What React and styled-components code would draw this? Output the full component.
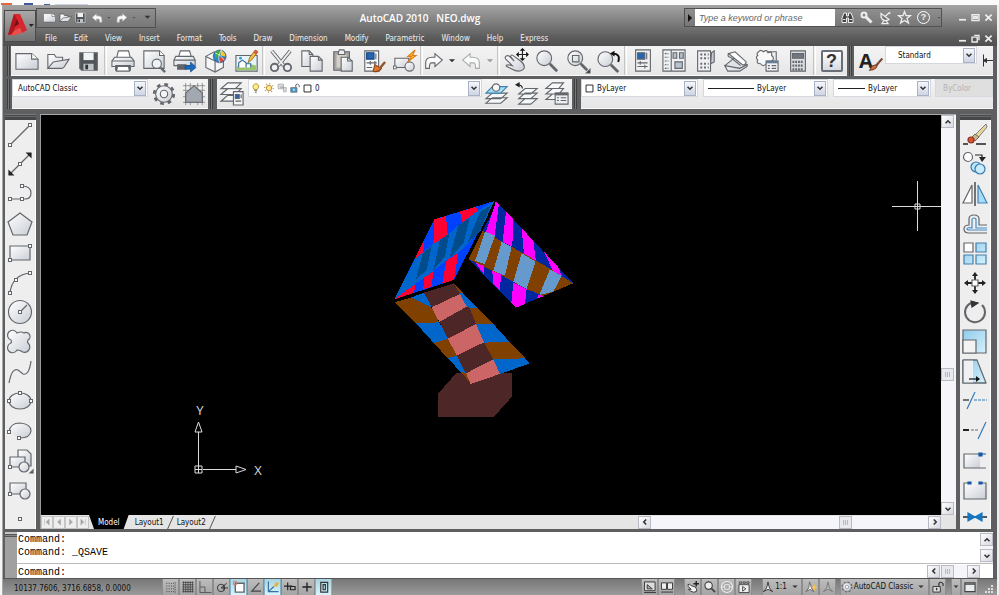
import React from "react";
import styled, { createGlobalStyle, css } from "styled-components";

const GlobalStyle = createGlobalStyle`
  * {
    box-sizing: border-box;
  }
  body {
    margin: 0;
    background: #fff;
    font: 8px/12px "DejaVu Sans Condensed", "DejaVu Sans", sans-serif;
    color: #111;
  }
  button, input, select {
    margin: 0;
    padding: 0;
    border: 0;
    background: none;
    font: inherit;
    color: inherit;
  }
`;

const metal = "url(#metal)";
const sky = "url(#sky)";

/* ---------- icons, all on a 26 unit square ---------- */

const Svg = styled.svg`
  display: block;
  flex: none;
  width: ${p => p.$size || 26}px;
  height: ${p => p.$size || 26}px;
  fill: none;
  stroke: ${p => p.$stroke || "#63666b"};
  stroke-width: 1.2;
  overflow: visible;
`;

const Dot = ({ x, y }) => (
  <rect x={x - 1.5} y={y - 1.5} width="3" height="3" fill="#fff" strokeWidth="1" />
);

const sheetPath = "M1 5H18L25 11V22H1Z";
const folderPath = "M2 21V6H9L11 9H18V12M2 21L8 14L25 11L20 19Q19 21 17 21Z";

const icons = {
  sheet: (
    <>
      <path d={sheetPath} fill={metal} />
      <path d="M18 5V11H25" fill="#fff" />
    </>
  ),
  folder: <path d={folderPath} fill={metal} />,
  disk: (
    <>
      <path d="M3 4H22V23H5L3 21Z" fill="#515459" />
      <path d="M7 4H18V12H7Z" fill="#f1f2f4" stroke="none" />
      <path d="M7 16H18V23H7Z" fill="#bfc4c9" stroke="none" />
      <path d="M9 17H12V22H9Z" fill="#333" stroke="none" />
    </>
  ),
  printer: (
    <>
      <path d="M6 10L8 2H19L21 10Z" fill="#fff" />
      <path d="M4 9H22L25 13V19H1V13Z" fill={metal} />
      <path d="M1 13H25M5 18H21V23H5Z" fill="#60646a" />
      <path d="M7 19H19L20 24H6Z" fill="#fff" />
    </>
  ),
  preview: (
    <>
      <path d="M2 2H19L24 7V21H2Z" fill={metal} />
      <path d="M19 2V7H24" fill="#fff" />
      <circle cx="16" cy="16" r="5" fill="#eef3f8" />
      <path d="M20 20L25 25" strokeWidth="2.5" />
    </>
  ),
  publish: (
    <>
      <path d="M6 9L8 2H18L20 9" fill="#fff" />
      <path d="M3 8H22L24 12V18H1V12Z" fill={metal} />
      <path d="M1 12H24M5 17H14V22H5Z" fill="#60646a" />
      <path d="M13 18H19V14L25 20L19 25V22H13Z" fill="#1869bd" stroke="#0f4c90" strokeWidth=".7" />
    </>
  ),
  globe: (
    <>
      <path d="M2 8L11 3L21 9V20L12 25L2 20Z" fill="#f5f6f8" />
      <path d="M2 8L12 13V25M12 13L21 9" />
      <circle cx="17" cy="8" r="7" fill="#2687c8" stroke="#226" strokeWidth=".5" />
      <path d="M12 4Q16 0 18 3Q18 8 12 10Z" fill="#43ad3b" stroke="none" />
      <path d="M18 1Q24 4 23 8L18 7Z" fill="#f4c830" stroke="none" />
      <path d="M17 9L23 10Q21 14 17 15Z" fill="#e0492d" stroke="none" />
      <path d="M12 4Q18 6 22 12M19 1Q14 8 17 15" stroke="#fff" strokeWidth=".7" />
    </>
  ),
  picture: (
    <>
      <path d="M1 7H24V24H1Z" fill="#e5f3fb" />
      <path d="M2 19Q12 14 23 18V23H2Z" fill="#99c56d" stroke="none" />
      <path d="M4 20V15L8 12L12 15V20M12 20V16H17V20" fill="#fff" stroke="#316993" />
      <circle cx="6" cy="10" r="1.5" fill="#3b94c8" stroke="none" />
      <path d="M14 15L16 9L22 1L25 3L18 12Z" fill="#f1bd3b" stroke="#875b21" strokeWidth=".8" />
      <path d="M22 1L25 3L23 6L20 4Z" fill="#d4593b" stroke="none" />
    </>
  ),
  cut: (
    <>
      <path d="M3 2L16 18M23 2L10 18" strokeWidth="4" />
      <path d="M3 2L16 18M23 2L10 18" stroke="#e9ebee" strokeWidth="2" />
      <circle cx="6" cy="20" r="4" fill="#edf0f3" strokeWidth="2" />
      <circle cx="20" cy="20" r="4" fill="#edf0f3" strokeWidth="2" />
    </>
  ),
  copy: (
    <>
      <path d="M2 2H10L14 6V19H2Z" fill={metal} />
      <path d="M11 8H20L24 12V24H11Z" fill={metal} />
      <path d="M20 8V12H24M10 2V6H14" />
    </>
  ),
  paste: (
    <>
      <path d="M3 3H20V23H3Z" fill="#aaa6a1" />
      <path d="M6 6H17V20H6Z" fill="#d5d0ca" stroke="none" />
      <path d="M8 4L9 1H14L15 4V6H8Z" fill="#eee" />
      <path d="M11 9H18L23 13V24H11Z" fill={metal} />
      <path d="M18 9V13H23" />
    </>
  ),
  match: (
    <>
      <path d="M3 2H18V24H3Z" fill="#f6f7f8" />
      <path d="M5 4H13V11H5Z" fill="#2665b0" stroke="#164781" />
      <path d="M15 5V11M5 15H16M5 20H11M9 13V17M14 13V17" />
      <path d="M25 14L20 20" strokeWidth="2.5" stroke="#8f532e" />
      <path d="M14 17L21 21Q18 26 12 24Z" fill="#df7730" stroke="#894719" />
    </>
  ),
  block: (
    <>
      <path d="M2 10H17V20H2Z" fill={metal} />
      <circle cx="18" cy="19" r="5" fill={metal} />
      <Dot x={2} y={20} />
      <path d="M24 1L16 8H20L16 14L25 7H21Z" fill="#ffc22c" stroke="#dc7c16" />
    </>
  ),
  undo: <path d="M4 21V15Q4 9 11 9H14V5L22 12L14 19V15H10Q8 15 8 21Z" fill="#fafafa" />,
  redo: <path d="M22 21V15Q22 9 15 9H12V5L4 12L12 19V15H16Q18 15 18 21Z" fill="#fafafa" stroke="#a9acae" />,
  caret: <path d="M8 10H18L13 15Z" fill="#333" stroke="none" />,
  caretOff: <path d="M8 10H18L13 15Z" fill="#999" stroke="none" />,
  pan: (
    <>
      <path d="M2 8Q4 6 7 9L11 13L7 8Q8 5 11 8L18 13Q24 18 21 22Q16 26 9 22L3 19Q1 17 5 17L9 18L3 12Q0 9 2 8Z" fill={metal} />
      <path d="M20 0V12M14 6H26" stroke="#222" />
      <path d="M20 -1L23 2H17ZM20 13L23 10H17ZM13 6L16 3V9ZM27 6L24 3V9Z" fill="#111" stroke="none" />
    </>
  ),
  zoom: (
    <>
      <circle cx="10" cy="10" r="8" fill={metal} />
      <path d="M16 16L24 24" strokeWidth="3" />
    </>
  ),
  zoomWindow: (
    <>
      <circle cx="10" cy="10" r="8" fill={metal} />
      <path d="M7 7H14V14H7Z" />
      <path d="M16 16L23 23" strokeWidth="3" />
      <path d="M26 22V26H22Z" fill="#000" />
    </>
  ),
  zoomPrevious: (
    <>
      <circle cx="9" cy="11" r="8" fill={metal} />
      <path d="M15 17L23 25" strokeWidth="3" />
      <path d="M17 5Q26 5 23 14" stroke="#111" strokeWidth="2" />
      <path d="M14 5L19 2V8Z" fill="#111" stroke="none" />
    </>
  ),
  properties: (
    <>
      <path d="M5 1H21V24H5Z" fill="#eef0f2" />
      <path d="M7 4H15V11H7Z" fill="#2665b0" />
      <path d="M17 4V11M7 15H18M7 19H18M10 13V17M15 17V21" />
    </>
  ),
  designCenter: (
    <>
      <path d="M1 1H25V24H1ZM10 1V24" fill="#eef0f2" />
      <path d="M3 5H7M3 9H7M3 13H7M3 17H7M3 21H7" strokeDasharray="2 1" />
      <path d="M12 4H16V10H12ZM19 4H23V10H19ZM14 14H22V21H14Z" fill="#b6c3d1" />
    </>
  ),
  palette: (
    <>
      <path d="M20 4L23 2V14L19 16Z" fill="#c8cbd0" />
      <path d="M5 2H19V24H5Z" fill="#eef0f2" />
      <path d="M8 6H10M12 6H14M16 6H17M8 10H10M12 10H14M16 10H17M8 16H10M12 16H14M16 16H17M8 20H10M12 20H14M16 20H17" strokeWidth="2" />
    </>
  ),
  sheetSet: (
    <>
      <path d="M1 18L12 9L25 17L17 21H3Z" fill="#dfe4e8" />
      <path d="M1 18L17 21L25 17V19L17 24H4Z" fill={metal} />
      <path d="M5 5L12 3L24 14Q23 18 20 17Z" fill="#fff" />
      <path d="M5 5Q3 8 7 9L18 18" />
    </>
  ),
  markup: (
    <>
      <path d="M4 3Q6 0 9 3Q13 0 14 4Q19 2 18 7Q22 10 18 13Q17 17 12 16Q9 20 6 16Q1 16 3 12Q0 9 3 7Q1 5 4 3Z" fill="#f8f8f9" />
      <path d="M14 3H23V12" />
      <path d="M12 13H25V24H12Z" fill="#f2f4f7" />
      <path d="M12 14H25" strokeWidth="3" stroke="#657c95" />
      <path d="M14 18H16M18 18H23M14 21H16M18 21H23" />
    </>
  ),
  calculator: (
    <>
      <path d="M5 2H21V24H5Z" fill="#d8dce1" />
      <path d="M7 5H19V10H7Z" fill="#737780" />
      <path d="M7 14H19M7 18H19M7 22H19" strokeWidth="2.5" strokeDasharray="2 1" />
    </>
  ),
  gear: (
    <>
      <circle cx="13" cy="13" r="10.5" strokeWidth="3" strokeDasharray="4 4.25" />
      <circle cx="13" cy="13" r="9" fill={metal} />
      <circle cx="13" cy="13" r="4" fill="#f4f4f4" />
    </>
  ),
  house: (
    <>
      <path d="M1 4H25M1 22H25M4 1V25M22 1V25M1 9H25M9 1V25M17 1V25M1 16H25" strokeWidth=".8" stroke="#777" />
      <path d="M4 12L13 4L22 12V22H4Z" fill="#a2a8b0" />
    </>
  ),
  layers: (
    <>
      <path d="M1 21L8 15H22L16 21ZM1 14L8 8H22L16 14ZM1 8L8 2H22L16 8Z" fill="#f7f8fa" />
      <path d="M14 11H24V25H14Z" fill="#f6f7f8" />
      <path d="M16 14H20V18H16Z" fill="#2665b0" />
      <path d="M22 14V18M16 21H22" />
    </>
  ),
  layerCurrent: (
    <>
      <path d="M1 23L8 17H24L17 23ZM1 18L8 12H24L17 18Z" fill="#f7f8fa" />
      <path d="M1 12L8 5H24L17 12Z" fill="#a9ddf6" stroke="#3c83ae" />
      <circle cx="12" cy="6" r="4" fill="#f6f6f6" />
    </>
  ),
  layerPrevious: (
    <>
      <path d="M4 24L11 18H24L17 24ZM4 18L11 12H24L17 18ZM4 13L11 7H24L17 13Z" fill="#f7f8fa" />
      <path d="M8 7Q8 3 2 3" stroke="#222" />
      <path d="M0 3L5 0V6Z" fill="#222" stroke="none" />
    </>
  ),
  layerState: (
    <>
      <path d="M1 19L8 13H20L15 19ZM1 13L8 7H20L15 13ZM1 7L8 1H20L15 7Z" fill="#f7f8fa" />
      <path d="M11 12H25V24H11Z" fill="#eceff2" />
      <path d="M11 13H25" strokeWidth="3" />
      <path d="M13 17H15M17 17H23M13 20H15M17 20H23" />
    </>
  ),
  line: (
    <>
      <path d="M3 23L23 3" />
      <Dot x={3} y={23} />
      <Dot x={23} y={3} />
    </>
  ),
  xline: (
    <>
      <path d="M3 23L23 3" />
      <path d="M24 2V6L20 2ZM2 24V20L6 24Z" fill="#222" stroke="#222" />
      <Dot x={13} y={13} />
    </>
  ),
  pline: (
    <>
      <path d="M3 18H18Q24 18 24 12Q24 5 15 5" />
      <Dot x={3} y={18} />
      <Dot x={15} y={18} />
      <Dot x={15} y={5} />
    </>
  ),
  polygon: <path d="M13 2L25 11L20 24H6L1 11Z" fill={metal} />,
  rect: (
    <>
      <path d="M3 6H23V20H3Z" fill={metal} />
      <Dot x={3} y={20} />
      <Dot x={23} y={6} />
    </>
  ),
  arc: (
    <>
      <path d="M3 23Q5 5 23 3" />
      <Dot x={3} y={23} />
      <Dot x={9} y={10} />
      <Dot x={23} y={3} />
    </>
  ),
  circle: (
    <>
      <circle cx="13" cy="13" r="11.5" fill={metal} />
      <path d="M13 13L20 6" />
      <Dot x={13} y={13} />
    </>
  ),
  cloud: (
    <path
      d="M4 11A5 5 0 1 1 10 4Q14 2 17 4A4 4 0 0 1 21 11Q20 13 21 14A5 5 0 1 1 14 22Q12 21 10 21A5 5 0 1 1 4 14Q5 13 4 11Z"
      fill={metal}
    />
  ),
  spline: <path d="M2 24Q5 8 11 11L16 15Q22 17 24 2" />,
  ellipse: (
    <>
      <ellipse cx="13" cy="13" rx="11" ry="8" fill={metal} />
      <Dot x={2} y={13} />
      <Dot x={24} y={13} />
      <Dot x={13} y={5} />
    </>
  ),
  ellipseArc: (
    <>
      <path d="M2 14Q3 5 13 5Q24 6 24 13Q23 20 13 20" fill={metal} />
      <Dot x={2} y={14} />
      <Dot x={12} y={20} />
    </>
  ),
  insert: (
    <>
      <path d="M11 9V2H20L24 6V18H11" fill={metal} />
      <path d="M3 9H18V19H3Z" fill={metal} />
      <circle cx="17" cy="19" r="5" fill={metal} />
      <Dot x={3} y={19} />
      <path d="M26 22V25H23Z" fill="#000" />
    </>
  ),
  makeBlock: (
    <>
      <path d="M3 6H19V17H3Z" fill={metal} />
      <circle cx="18" cy="17" r="5" fill={metal} />
      <Dot x={3} y={17} />
    </>
  ),
  point: <Dot x={13} y={15} />,
  erase: (
    <>
      <path d="M1 22H6M14 22H24" stroke="#222" strokeWidth="1.5" />
      <path d="M13 13L24 2L25 5L15 17Z" fill="#ead59a" strokeWidth=".8" />
      <path d="M10 15L13 12L17 15L13 19Z" fill="#c9b98a" stroke="#555" strokeWidth=".8" />
      <circle cx="9" cy="18" r="3" fill="#dc5033" stroke="#8d3424" />
    </>
  ),
  copyObject: (
    <>
      <circle cx="6" cy="6" r="4.5" fill="#fff" />
      <path d="M13 4H20V8" stroke="#222" />
      <path d="M17 6H24L20 11Z" fill="#222" stroke="none" />
      <circle cx="14" cy="16" r="5" fill="#b8e5fb" stroke="#3979ad" />
      <circle cx="18" cy="18" r="5" fill="#c9ebfc" stroke="#3979ad" />
    </>
  ),
  mirror: (
    <>
      <path d="M10 4V22H1Z" fill="#fff" />
      <path d="M13 1V25" stroke="#222" />
      <path d="M16 4V22H25Z" fill="#a6dcf8" stroke="#4383b4" />
    </>
  ),
  offset: (
    <>
      <path d="M25 14H17V8Q17 4 12 4Q7 4 7 8V14Q2 14 2 18Q2 22 7 22H25" />
      <path d="M25 17H14V9Q14 7 12 7Q10 7 10 9V17Q5 16 5 18Q5 19 8 19H25" stroke="#478dc4" />
    </>
  ),
  array: (
    <>
      <path d="M2 3H11V12H2Z" fill="#fff" />
      <path d="M14 3H24V12H14ZM2 15H11V24H2ZM14 15H24V24H14Z" fill={sky} stroke="#447eaa" />
    </>
  ),
  move: (
    <>
      <path d="M13 4V22M4 13H22" stroke="#222" strokeWidth="1.8" />
      <path d="M13 2L16 6H10ZM13 24L16 20H10ZM2 13L6 10V16ZM24 13L20 10V16Z" fill="#222" stroke="none" />
      <path d="M10 10H16V16H10Z" fill="#fff" />
    </>
  ),
  rotate: (
    <>
      <path d="M20 6A10 10 0 1 1 9 4" strokeWidth="2" />
      <path d="M9 2L16 4L10 8Z" fill="#333" stroke="#333" />
    </>
  ),
  scale: (
    <>
      <path d="M1 1H24V24H1Z" fill={sky} />
      <path d="M1 11H14V24H1Z" fill="#f3f3f4" />
    </>
  ),
  stretch: (
    <>
      <path d="M1 1H15L24 24H1Z" fill={sky} />
      <path d="M1 1H11V24H1Z" fill="#eef0f3" stroke="none" />
      <path d="M1 1H15M1 1V24H24" />
      <path d="M7 20H17" stroke="#111" />
      <path d="M18 20L14 17V23Z" fill="#111" stroke="none" />
    </>
  ),
  trim: (
    <>
      <path d="M1 12H7" stroke="#222" />
      <path d="M12 12H25" strokeDasharray="3 1" stroke="#347abb" />
      <path d="M5 21L13 4" stroke="#347abb" />
    </>
  ),
  extend: (
    <>
      <path d="M1 12H7" stroke="#222" strokeWidth="2" />
      <path d="M9 12H17" strokeDasharray="3 1" />
      <path d="M16 21L24 4" stroke="#347abb" />
    </>
  ),
  breakAt: (
    <>
      <path d="M2 6H18V20H2Z" fill={metal} stroke="none" />
      <path d="M18 6H2V20H24" />
      <path d="M18 6H24M17 5H20V8H17Z" fill="#1759a4" stroke="#1759a4" />
    </>
  ),
  breakLine: (
    <>
      <path d="M7 6H2V22H24V6H18" fill={metal} />
      <path d="M6 5H9V7H6ZM17 5H20V7H17Z" fill="#1759a4" stroke="#1759a4" />
    </>
  ),
  join: (
    <>
      <path d="M1 13H25" stroke="#222" strokeWidth="1.5" />
      <path d="M6 9V17L13 13ZM20 9V17L13 13Z" fill="#1676c1" stroke="#1676c1" />
    </>
  ),
  bulb: (
    <>
      <path d="M8 17Q2 7 9 3Q18 0 20 8Q20 13 16 17Z" fill="#ffed85" stroke="#a27e23" strokeWidth="2" />
      <path d="M9 20H16M10 24H15" strokeWidth="2.5" />
    </>
  ),
  sun: (
    <>
      <circle cx="13" cy="13" r="11" stroke="#b88630" strokeWidth="4" strokeDasharray="2 6.6" />
      <circle cx="13" cy="13" r="7" fill="#ffea83" stroke="#a77630" strokeWidth="2" />
    </>
  ),
  viewports: <path d="M3 3H17V15H3ZM9 10H17V23H24V12H9Z" fill="#ddd" stroke="#a5a5a5" strokeWidth="2" />,
  unlock: (
    <>
      <path d="M15 12V5Q19 0 24 6V11" strokeWidth="2.5" />
      <path d="M2 12H18V24H2Z" fill="#489bcf" strokeWidth="2" />
      <path d="M10 15V20" stroke="#fff" strokeWidth="3" />
    </>
  ),
  unlockGrey: (
    <>
      <path d="M15 12V5Q19 0 24 6V11" stroke="#333" strokeWidth="2.5" />
      <path d="M2 12H18V24H2Z" fill="#ddd" stroke="#333" strokeWidth="2" />
      <path d="M10 15V20" stroke="#333" strokeWidth="3" />
    </>
  ),
  swatch: <path d="M3 3H23V23H3Z" fill="#fff" stroke="#111" strokeWidth="2.5" />,
  binoculars: (
    <>
      <path d="M2 23V14L6 4H11V10H15V4H20L24 14V23H15V14H11V23Z" fill="#444" stroke="#eee" strokeWidth="2" />
      <path d="M4 17H9M17 17H22" stroke="#ddd" strokeWidth="2" />
    </>
  ),
  key: (
    <>
      <path d="M11 11L23 23" stroke="#eee" strokeWidth="6" />
      <circle cx="8" cy="8" r="5" stroke="#eee" strokeWidth="4" />
    </>
  ),
  dish: (
    <>
      <path d="M4 5L20 17Q12 22 6 16Q3 11 4 5Z" fill="#777" stroke="#eee" strokeWidth="2.5" />
      <path d="M12 11L20 4M10 19L6 25H18L14 19" stroke="#eee" strokeWidth="2.5" />
      <circle cx="21" cy="4" r="2" fill="#eee" stroke="none" />
    </>
  ),
  star: <path d="M13 1L16 9H25L18 15L21 24L13 19L5 24L8 15L1 9H10Z" stroke="#eee" strokeWidth="2.5" />,
  annotation: (
    <path d="M13 2L10 15L3 23L13 18L23 23L16 15Z" fill="#fff" stroke="#333" strokeWidth="2" />
  ),
  annotationAuto: (
    <>
      <path d="M10 2L8 15L2 23L11 18L19 23L14 15Z" fill="#fff" stroke="#666" strokeWidth="2" />
      <path d="M20 6L22 12L27 14L22 16L20 22L18 16L14 14L18 12Z" fill="#f9c54b" stroke="none" />
    </>
  ),
  annotationOff: <path d="M13 2L10 15L3 23L13 18L23 23L16 15Z" fill="#bbb" stroke="#777" strokeWidth="2" />,
  snap: <path d="M3 5H21M3 11H21M3 17H21M3 23H21M22 3V25" stroke="#333" strokeWidth="2" strokeDasharray="2 3" />,
  grid: <path d="M1 3H25M1 8H25M1 13H25M1 18H25M1 23H25M3 1V25M8 1V25M13 1V25M18 1V25M23 1V25" stroke="#333" strokeWidth="1.5" />,
  ortho: <path d="M2 0V25H27M2 13H13V25" stroke="#555" strokeWidth="2" />,
  polar: (
    <>
      <circle cx="11" cy="15" r="8" stroke="#333" strokeWidth="2" />
      <path d="M23 5L11 15H26M17 9V20" stroke="#333" strokeWidth="2" />
    </>
  ),
  osnap: (
    <>
      <path d="M5 5H24V24H5Z" fill="#fff" strokeWidth="3" />
      <path d="M1 1H8V8H1Z" stroke="#df756d" strokeWidth="2" />
    </>
  ),
  otrack: <path d="M20 4L4 22H24" stroke="#444" strokeWidth="2.5" />,
  ducs: (
    <>
      <path d="M3 1V23H25M3 23L15 12" stroke="#37709b" strokeWidth="2.5" />
      <path d="M15 12L18 3L26 4L22 12Z" fill="#edae32" stroke="none" />
    </>
  ),
  dynamic: <path d="M8 3V20M0 11H18M14 12H24V19H14Z" stroke="#222" strokeWidth="2.5" />,
  weight: <path d="M13 3V23M3 13H23" stroke="#222" strokeWidth="3" />,
  quickProps: <path d="M6 3H21V24H6ZM11 8H16V19H11Z" stroke="#333" strokeWidth="2.5" />,
  model: <path d="M1 2H24V21H1ZM7 8V17H18ZM0 25H26" fill="#ddd" stroke="#333" strokeWidth="2" />,
  layoutView: <path d="M1 4H12V18H1ZM14 4H25V18H14ZM0 24H26" fill="#eee" stroke="#333" strokeWidth="2" />,
  hand: (
    <>
      <path d="M2 8Q5 5 9 10L18 13Q23 18 20 23Q14 26 8 22L3 18H9L3 12Z" fill="#f3f3f3" stroke="#333" strokeWidth="2" />
      <path d="M20 0V12M14 6H26" stroke="#222" strokeWidth="3" />
    </>
  ),
  lens: (
    <>
      <circle cx="10" cy="10" r="8" fill="#eee" stroke="#444" strokeWidth="2.5" />
      <path d="M16 16L24 24" stroke="#444" strokeWidth="4" />
    </>
  ),
  wheel: (
    <>
      <circle cx="13" cy="13" r="12" fill="#aaa" stroke="#eee" strokeWidth="2.5" />
      <path d="M8 8H18V18H8ZM2 13H8M18 13H24" stroke="#eee" strokeWidth="2" />
    </>
  ),
  motion: <path d="M2 8H24V25H2ZM10 12L17 17L10 22ZM3 2H8V5H3ZM11 2H16V5H11ZM19 2H24V5H19Z" fill="#eee" stroke="#444" strokeWidth="2" />,
  screen: <path d="M2 4H24V23H2ZM2 7H24" fill="#e9ecef" stroke="#444" strokeWidth="2.5" />,
  minimize: <path d="M3 17H23V22H3Z" fill="#eee" stroke="none" />,
  maximize: <path d="M3 5H23V22H3ZM8 11H18V16H8Z" stroke="#eee" strokeWidth="4" />,
  restore: <path d="M3 9H18V23H3ZM9 4H23V18" stroke="#eee" strokeWidth="4" />,
  close: <path d="M4 5L22 22M22 5L4 22" stroke="#eee" strokeWidth="5" />,
  first: <path d="M5 3V23M20 3L10 13L20 23Z" fill="#aaa" stroke="#999" />,
  prev: <path d="M18 3L8 13L18 23Z" fill="#aaa" stroke="#999" />,
  next: <path d="M8 3L18 13L8 23Z" fill="#aaa" stroke="#999" />,
  last: <path d="M21 3V23M6 3L16 13L6 23Z" fill="#aaa" stroke="#999" />,
  up: <path d="M5 17L13 9L21 17" stroke="#333" strokeWidth="5" />,
  down: <path d="M5 9L13 17L21 9" stroke="#333" strokeWidth="5" />,
  left: <path d="M17 5L9 13L17 21" stroke="#333" strokeWidth="5" />,
  right: <path d="M9 5L17 13L9 21" stroke="#333" strokeWidth="5" />,
  dimension: <path d="M3 1V25M3 13H26M9 9L3 13L9 17Z" fill="#333" stroke="#333" strokeWidth="2" />,
  textStyle: (
    <>
      <path d="M24 10L17 18" stroke="#7b4d36" strokeWidth="2.5" />
      <path d="M12 19L18 17Q18 23 9 24Z" fill="#cf7142" stroke="#74401f" />
    </>
  )
};

const Icon = ({ name, size, stroke }) => (
  <Svg viewBox="0 0 26 26" $size={size} $stroke={stroke} aria-hidden="true">
    {icons[name]}
  </Svg>
);

/* ---------- frame ---------- */

const Page = styled.div`
  display: flex;
  flex-direction: column;
  height: 100vh;
  padding: 0 2px 0 3px;
  background: linear-gradient(90deg, #f6f6f6 0 2px, #a8a8a8 2px 4px, #eee 4px);
`;

const Behind = styled.div`
  flex: none;
  height: 5px;
  margin: 0 -2px 0 -3px;
  background: #fbfbfb;
  overflow: hidden;
`;

const Window = styled.div`
  display: flex;
  flex: 1;
  flex-direction: column;
  min-height: 0;
  background: #5d5f61;
`;

const Header = styled.header`
  display: flex;
  flex: none;
  height: 41px;
  padding: 0 4px 0 1px;
  background: linear-gradient(#a4a4a4, #858585 35%, #5b5b5b 80%, #4f4f4f);
  color: #f0f0f0;
`;

const AppButton = styled.button`
  display: flex;
  align-items: center;
  width: 32px;
  height: 32px;
  margin-top: 5px;
  border: 1px solid #4a4a4a;
  background: linear-gradient(#a9a9a9, #737373);
`;

const HeaderRows = styled.div`
  display: flex;
  flex: 1;
  flex-direction: column;
`;

const TitleRow = styled.div`
  display: flex;
  align-items: center;
  height: 25px;
`;

const QuickAccess = styled.div`
  display: flex;
  align-items: center;
  justify-content: space-between;
  width: 120px;
  height: 20px;
  padding: 0 0 0 6px;
  border: 1px solid #505050;
  background: linear-gradient(#8f8f8f, #777);
`;

const Title = styled.h1`
  flex: 1;
  margin: 0;
  font: 600 10px/16px "Open Sans", sans-serif;
  text-align: center;
  white-space: pre;
  color: #fff;
`;

const Search = styled.form`
  display: flex;
  align-items: center;
  gap: 6px;
  width: 258px;
  height: 19px;
  padding-right: 3px;
  border: 1px solid #505050;
  background: linear-gradient(#8f8f8f, #777);
`;

const SearchField = styled.label`
  display: flex;
  align-items: center;
  width: 150px;
  height: 100%;
`;

const SearchInput = styled.input`
  width: 140px;
  height: 17px;
  padding-left: 4px;
  background: #fff;
  font: italic 9px/16px "Liberation Sans", sans-serif;
  color: #333;

  &::placeholder {
    color: #666;
    opacity: 1;
  }
`;

const PlainButton = styled.button`
  display: flex;
  align-items: center;
  justify-content: center;
  flex: none;
`;

const HelpMark = styled.span`
  display: block;
  width: 13px;
  height: 13px;
  border: 1px solid #fff;
  border-radius: 50%;
  font: bold 9px/11px "Liberation Sans", sans-serif;
  text-align: center;
`;

const WindowButtons = styled.div`
  display: flex;
  gap: 4px;
  margin-left: auto;
`;

const TitleEnd = styled.div`
  display: flex;
  width: 51px;
`;

const MenuRow = styled.nav`
  display: flex;
  align-items: center;
  gap: 17px;
  height: 16px;
  padding-left: 9px;
`;

const MenuButton = styled.button`
  padding-top: 1px;
  line-height: 14px;
`;

/* ---------- tool bars ---------- */

const ToolRow = styled.div`
  display: flex;
  flex: none;
  height: 30px;
  margin-bottom: 3px;
  padding: 0 4px 0 2px;
`;

const Grip = styled.div`
  flex: none;
  width: ${p => p.$width || 7}px;
  background: linear-gradient(90deg, #5d5f61 2px, #3d3e40 2px 3px, #777 3px 4px, #3d3e40 4px 5px, #5d5f61 5px);
`;

const panel = css`
  background: linear-gradient(#f4f4f4, #e6e6e6);
  border-bottom: 1px solid #fafafa;
`;

const Tools = styled.div`
  display: flex;
  flex: ${p => (p.$grow ? 1 : "none")};
  width: ${p => (p.$width ? `${p.$width}px` : "auto")};
  min-width: 0;
  overflow: hidden;
  ${panel};
`;

const ToolButton = styled.button`
  display: flex;
  align-items: center;
  justify-content: center;
  flex: none;
  width: ${p => p.$width || 31}px;
  overflow: hidden;
`;

const Separator = styled.span`
  flex: none;
  width: 3px;
  border-left: 1px solid #c4c4c4;
  border-right: 1px solid #fff;
`;

const HelpTile = styled.span`
  width: 22px;
  height: 22px;
  border: 2px solid #6a6f77;
  border-radius: 2px;
  background: linear-gradient(#fff, #d7dae0);
  font: bold 18px/19px "Liberation Sans", sans-serif;
  color: #333;
`;

const TextStyleTile = styled.span`
  display: flex;
  align-items: center;
  padding-left: 4px;
  font: bold 20px/24px "Open Sans", sans-serif;
  color: #222;

  svg {
    margin-left: -11px;
  }
`;

const Combo = styled.div`
  display: flex;
  align-items: center;
  flex: ${p => (p.$grow ? p.$grow : "none")};
  width: ${p => (p.$width ? `${p.$width}px` : "auto")};
  height: 18px;
  margin-right: ${p => p.$gap || 0}px;
  padding: 1px;
  padding-left: ${p => p.$indent || 4}px;
  gap: 3px;
  border: 1px solid #d5d9df;
  background: ${p => (p.$off ? "#dfdfdf" : "#fff")};
  color: ${p => (p.$off ? "#b3b3b3" : "#111")};
`;

const ComboSelect = styled.select`
  flex: 1;
  min-width: 0;
  height: 14px;
  padding-top: 1px;
  appearance: none;
  opacity: 1;
`;

const ComboArrow = styled.span`
  display: flex;
  align-items: center;
  justify-content: center;
  flex: none;
  width: 12px;
  height: 15px;
  border: 1px solid #a9b1c4;
  background: linear-gradient(#f5f7fb, #cfd5e4);
`;

const LineSample = styled.span`
  flex: none;
  width: ${p => p.$width}px;
  height: 1px;
  background: #222;
`;

const ComboField = ({ label, value, before, off, ...props }) => (
  <Combo $off={off} {...props}>
    {before}
    <ComboSelect aria-label={label} disabled={off}>
      <option>{value}</option>
    </ComboSelect>
    {!off && (
      <ComboArrow>
        <Icon name="down" size={8} />
      </ComboArrow>
    )}
  </Combo>
);

/* ---------- workspace ---------- */

const Workspace = styled.main`
  display: flex;
  flex: 1;
  min-height: 0;
  margin-top: 2px;
  padding: 0 6px 0 2px;
`;

const SideBar = styled.div`
  display: flex;
  flex-direction: column;
  flex: none;
  width: 31px;
`;

const SideGrip = styled.div`
  flex: none;
  height: 6px;
  border-top: 1px solid #77797b;
  background: linear-gradient(#454749 1px, #67696b 1px 2px, #454749 2px);
`;

const SideTools = styled.div`
  display: grid;
  flex: 1;
  grid-template-rows: repeat(13, minmax(0, 1fr)) 24px;
  min-height: 0;
  background: #eeeeee;
  border-right: 1px solid #fff;
`;

const SideButton = styled.button`
  display: flex;
  align-items: center;
  justify-content: center;
  min-height: 0;
`;

const DrawingWindow = styled.section`
  display: flex;
  flex: 1;
  flex-direction: column;
  min-width: 0;
  margin: 0 4px;
  border-top: 1px solid #aaa;
  border-left: 1px solid #999;
`;

const ViewRow = styled.div`
  display: flex;
  flex: 1;
  min-height: 0;
`;

const Canvas = styled.svg`
  display: block;
  flex: 1;
  min-width: 0;
  height: 100%;
  background: #000;
`;

const AxisLabel = styled.text`
  font: 13px "Open Sans", sans-serif;
  fill: #d8d8d8;
  text-anchor: middle;
`;

const Scroll = styled.div`
  display: flex;
  flex: none;
  flex-direction: ${p => (p.$vertical ? "column" : "row")};
  width: ${p => (p.$vertical ? "15px" : `${p.$length}px`)};
  height: ${p => (p.$vertical ? "auto" : "13px")};
  background: #f5f5fa;
`;

const ScrollButton = styled.button`
  display: flex;
  align-items: center;
  justify-content: center;
  flex: none;
  width: 13px;
  height: 13px;
  border: 1px solid #b9bac6;
  background: linear-gradient(135deg, #fff, #d8d9e2);
`;

const Track = styled.span`
  flex: ${p => p.$part};
`;

const Thumb = styled.span`
  flex: none;
  width: 13px;
  height: 13px;
  border: 1px solid #b9bac6;
  background: repeating-linear-gradient(90deg, #bbb 0 1px, #e3e3ea 1px 2px) center / 5px 5px no-repeat #e9e9f0;
`;

const ScrollBar = ({ vertical, before, after, length, label }) => (
  <Scroll $vertical={vertical} $length={length}>
    <ScrollButton aria-label={`${label} back`}>
      <Icon name={vertical ? "up" : "left"} size={8} />
    </ScrollButton>
    <Track $part={before} />
    <Thumb />
    <Track $part={after} />
    <ScrollButton aria-label={`${label} forward`}>
      <Icon name={vertical ? "down" : "right"} size={8} />
    </ScrollButton>
  </Scroll>
);

const TabRow = styled.div`
  display: flex;
  align-items: center;
  flex: none;
  height: 14px;
  padding-right: 15px;
  background: #e5e5e5;
`;

const TabNav = styled.button`
  display: flex;
  align-items: center;
  justify-content: center;
  width: 12px;
  height: 13px;
  border: 1px solid #c5c5c5;
  background: #eee;
`;

const Tab = styled.button`
  height: 14px;
  padding: 1px ${p => (p.$active ? 9 : 6)}px 0;
  line-height: 13px;
  ${p =>
    p.$active &&
    css`
      background: #000;
      color: #fff;
      clip-path: polygon(0 0, 100% 0, calc(100% - 5px) 100%, 5px 100%);
    `};
`;

const Slash = styled.span`
  width: 1px;
  height: 13px;
  background: #555;
  transform: skewX(-24deg);
`;

const Push = styled.span`
  flex: 1;
`;

/* ---------- command line ---------- */

const CommandWindow = styled.section`
  display: flex;
  flex: none;
  height: 46px;
  margin: 3px 4px 0 2px;
  background: #fff;
`;

const CommandGrip = styled.div`
  flex: none;
  width: 12px;
  border-top: 2px solid #c5c5c5;
  background: linear-gradient(#555 1px, #888 1px 2px, #555 2px 3px, #a0a0a0 3px);
`;

const CommandText = styled.div`
  display: flex;
  flex: 1;
  flex-direction: column;
  font: 10px/13px "Liberation Mono", monospace;
  color: #000;
`;

const History = styled.pre`
  flex: 1;
  margin: 0;
  padding: 1px 0 0 1px;
  font: inherit;
`;

const Prompt = styled.div`
  display: flex;
  align-items: center;
  height: 15px;
  padding-left: 1px;
  border-top: 1px solid #bbb;

  label {
    padding-top: 2px;
  }

  input {
    flex: 1;
    height: 13px;
    padding-left: 6px;
  }
`;

const HistoryRow = styled.div`
  display: flex;
  flex: 1;
`;

const HistoryScroll = styled.div`
  display: flex;
  flex-direction: column;
  justify-content: space-between;
  padding: 1px 0;
  background: #f5f5fa;
`;

/* ---------- status bar ---------- */

const StatusBar = styled.footer`
  display: flex;
  align-items: stretch;
  flex: none;
  height: 17px;
  padding: 0 4px 0 2px;
  border-top: 1px solid #555;
  background: linear-gradient(#777, #9a9a9a);
`;

const Coordinates = styled.output`
  width: 157px;
  padding: 1px 0 0 9px;
  line-height: 17px;
`;

const StatusButton = styled.button`
  display: flex;
  align-items: center;
  justify-content: center;
  gap: 1px;
  flex: none;
  width: ${p => p.$width || 17}px;
  border: 1px solid ${p => (p.$on ? "#7fb2c4" : "#8d8d8d")};
  border-width: 0 1px;
  background: ${p => (p.$on ? "linear-gradient(#a8d3df, #d8f5fc)" : "linear-gradient(#bdbdbd, #a5a5a5)")};
  white-space: nowrap;
`;

const StatusGap = styled.span`
  flex: none;
  width: ${p => p.$width}px;
`;

const menus = [
  "File", "Edit", "View", "Insert", "Format", "Tools", "Draw",
  "Dimension", "Modify", "Parametric", "Window", "Help", "Express"
];

const standardTools = [
  ["sheet", "folder", "disk"],
  ["printer", "preview", "publish", "globe", "picture"],
  ["cut", "copy", "paste", "match", "block"],
  ["undo", "caret", "redo", "caretOff"],
  ["pan", "zoom", "zoomWindow", "zoomPrevious"],
  ["properties", "designCenter", "palette", "sheetSet", "markup", "calculator"]
];

const toolWidths = { undo: 22, redo: 24, caret: 14, caretOff: 14 };
const toolSizes = { caret: 16, caretOff: 16 };

const drawTools = [
  "line", "xline", "pline", "polygon", "rect", "arc", "circle",
  "cloud", "spline", "ellipse", "ellipseArc", "insert", "makeBlock", "point"
];

const modifyTools = [
  "erase", "copyObject", "mirror", "offset", "array", "move", "rotate",
  "scale", "stretch", "trim", "extend", "breakAt", "breakLine", "join"
];

const toggles = [
  ["snap"], ["grid"], ["ortho"], ["polar"], ["osnap", true],
  ["otrack"], ["ducs", true], ["dynamic"], ["weight"], ["quickProps", true]
];

// [fill, points] pairs, painted in order
const faces = [
  ["#4d2628", "174,612 228,550 396,550 396,620 342,680 174,680"],
  // lower arm
  ["#804000", "43,337 95,322 153,350 178,397 108,400"],
  ["#0066cc", "95,322 132,308 155,352"],
  ["#0066cc", "108,400 178,397 204,446 162,460"],
  ["#804000", "162,460 204,446 230,497 203,505"],
  ["#0066cc", "203,505 230,497 258,550 246,550"],
  ["#804000", "244,546 258,550 272,582"],
  ["#804000", "222,280 250,310 238,310"],
  ["#0066cc", "238,308 250,310 292,355 260,354"],
  ["#804000", "260,354 292,355 340,402 286,404"],
  ["#0066cc", "286,402 340,402 388,455 312,458"],
  ["#804000", "312,458 388,455 436,505 338,510"],
  ["#0066cc", "338,508 436,505 450,520 360,552"],
  ["#4d2628", "132,308 222,280 240,312 155,352"],
  ["#cc6666", "155,352 240,312 260,350 178,396"],
  ["#4d2628", "178,396 260,350 268,352 288,402 204,446"],
  ["#cc6666", "204,446 288,402 312,457 230,497"],
  ["#4d2628", "230,497 312,457 340,508 258,550"],
  ["#cc6666", "258,550 340,508 360,552 272,582"],
  // middle arm
  ["#0040ff", "163,88 343,33 222,270 43,328"],
  ["#ff0033", "163,88 198,78 203,135 160,165"],
  ["#ff0033", "240,65 288,50 294,65 247,98"],
  ["#ff0033", "132,150 130,190 104,208"],
  ["#0066cc", "343,33 294,62 245,98 203,135 155,165 105,207 43,328 105,283 155,247 200,210 238,185 300,125"],
  ["#004c8c", "128,190 155,168 140,240 108,268"],
  ["#004c8c", "180,150 208,130 195,200 160,240"],
  ["#004c8c", "235,105 270,83 250,160 208,206"],
  ["#004c8c", "300,66 332,46 300,125 262,160"],
  ["#ff0033", "43,328 105,283 103,308"],
  ["#ff0033", "132,262 160,245 155,290 130,298"],
  ["#ff0033", "200,210 235,190 222,270 187,280"],
  // upper arm
  ["#0026a0", "352,37 580,280 407,353 265,207"],
  ["#ff00ff", "347,36 357,42 344,137 318,126"],
  ["#ff00ff", "378,65 400,88 397,170 368,155"],
  ["#ff00ff", "425,115 460,152 468,215 432,192"],
  ["#ff00ff", "492,185 536,233 546,260 520,245"],
  ["#804000", "308,122 370,157 430,190 500,230 580,280 490,318 440,297 340,243 265,207"],
  ["#6699cc", "315,125 345,137 315,222 285,213"],
  ["#6699cc", "365,155 395,170 375,257 340,243"],
  ["#6699cc", "425,190 467,215 440,297 400,275"],
  ["#6699cc", "510,238 545,258 520,305 478,315"],
  ["#ff00ff", "285,217 312,228 312,253"],
  ["#ff00ff", "337,243 363,253 360,303 340,282"],
  ["#ff00ff", "400,278 440,298 435,342 407,353 394,340"],
  ["#ff00ff", "476,314 492,318 470,326"]
];

const Caption = ({ restore }) => (
  <WindowButtons>
    {["minimize", restore ? "restore" : "maximize", "close"].map(name => (
      <PlainButton key={name} aria-label={name}>
        <Icon name={name} size={9} />
      </PlainButton>
    ))}
  </WindowButtons>
);

const TopBar = () => (
  <Header>
    <AppButton aria-label="Application menu">
      <svg width="30" height="30" viewBox="0 0 30 30">
        <path d="M3 24L9 3L15 3L22 19L17 22L15 17L9 20L8 23Z" fill="#d9272e" />
        <path d="M9 3L3 24L8 23L12 8Z" fill="#b3161f" />
        <path d="M12 8L9 16L14 13Z" fill="#701018" />
        <path d="M8 21L15 17L17 22L6 25Z" fill="#f04b4b" />
        <path d="M24 13H29L26 16Z" fill="#222" />
      </svg>
    </AppButton>
    <HeaderRows>
      <TitleRow>
        <QuickAccess>
          <PlainButton aria-label="New"><Icon name="sheet" size={13} /></PlainButton>
          <PlainButton aria-label="Open"><Icon name="folder" size={13} stroke="#444" /></PlainButton>
          <PlainButton aria-label="Save"><Icon name="disk" size={13} stroke="#ddd" /></PlainButton>
          <PlainButton aria-label="Undo"><Icon name="redo" size={14} /></PlainButton>
          <PlainButton aria-label="Undo list"><Icon name="caret" size={6} /></PlainButton>
          <PlainButton aria-label="Redo"><Icon name="undo" size={14} stroke="#bbb" /></PlainButton>
          <PlainButton aria-label="Redo list"><Icon name="caret" size={6} /></PlainButton>
          <PlainButton aria-label="Customize"><Icon name="caret" size={15} /></PlainButton>
        </QuickAccess>
        <Title>{"AutoCAD 2010   NEO.dwg"}</Title>
        <Search onSubmit={e => e.preventDefault()}>
          <SearchField>
            <svg width="10" height="10" viewBox="0 0 10 10" aria-hidden="true">
              <path d="M3 1L7 5L3 9Z" fill="#111" />
            </svg>
            <SearchInput type="text" aria-label="Search" placeholder="Type a keyword or phrase" />
          </SearchField>
          {["binoculars", "key", "dish", "star"].map(name => (
            <PlainButton key={name} type="button" aria-label={name}>
              <Icon name={name} size={13} />
            </PlainButton>
          ))}
          <PlainButton type="button" aria-label="Help"><HelpMark>?</HelpMark></PlainButton>
          <PlainButton type="button" aria-label="Help list"><Icon name="caret" size={6} /></PlainButton>
        </Search>
        <TitleEnd><Caption /></TitleEnd>
      </TitleRow>
      <MenuRow>
        {menus.map(menu => (
          <MenuButton key={menu}>{menu}</MenuButton>
        ))}
        <Caption restore />
      </MenuRow>
    </HeaderRows>
  </Header>
);

const StandardBar = () => (
  <ToolRow>
    <Grip $width={6} />
    <Tools>
      {standardTools.map((group, index) => (
        <React.Fragment key={index}>
          {group.map(name => (
            <ToolButton key={name} $width={toolWidths[name]} aria-label={name}>
              <Icon name={name} size={toolSizes[name] || 24} />
            </ToolButton>
          ))}
          <Separator />
        </React.Fragment>
      ))}
      <ToolButton aria-label="Help"><HelpTile>?</HelpTile></ToolButton>
    </Tools>
    <Grip />
    <Tools $grow>
      <ToolButton aria-label="Text style">
        <TextStyleTile>A<Icon name="textStyle" size={22} /></TextStyleTile>
      </ToolButton>
      <ComboField label="Text style" value="Standard" $grow={1} $indent={12} $gap={6} />
      <ToolButton $width={10} aria-label="Dimension style">
        <Icon name="dimension" size={13} />
      </ToolButton>
    </Tools>
  </ToolRow>
);

const PropertiesBar = () => (
  <ToolRow>
    <Grip />
    <Tools $width={196}>
      <ComboField label="Workspace" value="AutoCAD Classic" $width={136} $indent={5} />
      <ToolButton aria-label="Workspace settings"><Icon name="gear" size={24} /></ToolButton>
      <ToolButton $width={29} aria-label="My workspace"><Icon name="house" size={24} /></ToolButton>
    </Tools>
    <Grip $width={9} />
    <Tools $width={355}>
      <ToolButton aria-label="Layer properties"><Icon name="layers" size={25} /></ToolButton>
      <ComboField
        label="Layer"
        value="0"
        $width={234}
        $indent={2}
        before={["bulb", "sun", "viewports", "unlock", "swatch"].map(name => (
          <Icon key={name} name={name} size={name === "swatch" ? 9 : 10} />
        ))}
      />
      {["layerCurrent", "layerPrevious", "layerState"].map(name => (
        <ToolButton key={name} $width={30} aria-label={name}>
          <Icon name={name} size={24} />
        </ToolButton>
      ))}
    </Tools>
    <Grip $width={9} />
    <Tools $grow>
      <ComboField label="Color" value="ByLayer" $width={117} $gap={5} $indent={3} before={<Icon name="swatch" size={9} />} />
      <ComboField label="Linetype" value="ByLayer" $width={125} $gap={5} before={<LineSample $width={46} />} />
      <ComboField label="Lineweight" value="ByLayer" $width={98} $gap={4} before={<LineSample $width={27} />} />
      <ComboField label="Plot style" value="ByColor" $grow={1} $indent={7} off />
    </Tools>
  </ToolRow>
);

const ToolColumn = ({ tools }) => (
  <SideBar>
    <SideGrip />
    <SideTools>
      {tools.map(name => (
        <SideButton key={name} aria-label={name}>
          <Icon name={name} size={26} />
        </SideButton>
      ))}
    </SideTools>
  </SideBar>
);

const Drawing = () => (
  <Canvas viewBox="41 115 900 400" preserveAspectRatio="xMinYMid" role="img" aria-label="Robot arm model">
    <defs>
      <linearGradient id="metal" x1="0" y1="0" x2="1" y2="1">
        <stop offset="0" stopColor="#fff" />
        <stop offset="1" stopColor="#c9ced6" />
      </linearGradient>
      <linearGradient id="sky" x1="0" y1="0" x2="1" y2="1">
        <stop offset="0" stopColor="#8fcbea" />
        <stop offset="1" stopColor="#d5f0fc" />
      </linearGradient>
    </defs>
    <g transform="translate(380 190) scale(.3333)" shapeRendering="crispEdges">
      {faces.map(([fill, points], index) => (
        <polygon key={index} fill={fill} points={points} />
      ))}
    </g>
    <g fill="none" stroke="#dcdcdc">
      <path d="M198.500 466V432M195 432L198.500 422L202 432ZM203 469.500H236M236 466L246 469.500L236 473Z" />
      <path d="M195 466H202V473H195ZM198.500 466V473M195 469.500H202" />
      <path d="M892 206.500H941M917.500 181V231M915 204H920V209H915Z" />
    </g>
    <AxisLabel x="200" y="415">Y</AxisLabel>
    <AxisLabel x="258" y="475">X</AxisLabel>
  </Canvas>
);

const DrawingArea = () => (
  <DrawingWindow>
    <ViewRow>
      <Drawing />
      <ScrollBar vertical label="Scroll vertically" before={241} after={122} />
    </ViewRow>
    <TabRow>
      {["first", "prev", "next", "last"].map(name => (
        <TabNav key={name} aria-label={`${name} tab`} disabled>
          <Icon name={name} size={8} />
        </TabNav>
      ))}
      <Tab $active>Model</Tab>
      <Tab>Layout1</Tab>
      <Slash />
      <Tab>Layout2</Tab>
      <Slash />
      <Push />
      <ScrollBar length={303} label="Scroll horizontally" before={187} after={76} />
    </TabRow>
  </DrawingWindow>
);

const CommandLine = () => (
  <CommandWindow>
    <CommandGrip />
    <CommandText>
      <HistoryRow>
        <History>{"Command:\nCommand: _QSAVE"}</History>
        <HistoryScroll>
          <ScrollButton aria-label="History up"><Icon name="up" size={8} /></ScrollButton>
          <ScrollButton aria-label="History down"><Icon name="down" size={8} /></ScrollButton>
        </HistoryScroll>
      </HistoryRow>
      <Prompt>
        <label htmlFor="command">Command:</label>
        <input id="command" type="text" />
        <ScrollBar length={53} label="Scroll command line" before={1} after={13} />
        <StatusGap $width={13} />
      </Prompt>
    </CommandText>
  </CommandWindow>
);

const Status = () => (
  <StatusBar>
    <Coordinates>10137.7606, 3716.6858, 0.0000</Coordinates>
    {toggles.map(([name, on]) => (
      <StatusButton key={name} $on={on} aria-pressed={!!on} aria-label={name}>
        <Icon name={name} size={12} />
      </StatusButton>
    ))}
    <Push />
    {["model", "layoutView"].map(name => (
      <StatusButton key={name} aria-label={name}><Icon name={name} size={12} /></StatusButton>
    ))}
    <StatusGap $width={9} />
    {["hand", "lens", "wheel", "motion"].map(name => (
      <StatusButton key={name} aria-label={name}><Icon name={name} size={12} /></StatusButton>
    ))}
    <StatusGap $width={10} />
    <StatusButton $width={40}>
      <Icon name="annotation" size={12} />
      1:1
      <Icon name="caret" size={14} />
    </StatusButton>
    <StatusButton aria-label="Annotation visibility"><Icon name="annotationAuto" size={12} /></StatusButton>
    <StatusButton aria-label="Annotation scale"><Icon name="annotationOff" size={12} /></StatusButton>
    <StatusGap $width={4} />
    <StatusButton $width={89}>
      <Icon name="gear" size={12} />
      AutoCAD Classic
      <Icon name="caret" size={14} />
    </StatusButton>
    <StatusButton aria-label="Lock"><Icon name="unlockGrey" size={12} /></StatusButton>
    <StatusGap $width={5} />
    <StatusButton $width={10} aria-label="Status bar menu"><Icon name="caret" size={12} /></StatusButton>
    <StatusButton aria-label="Clean screen"><Icon name="screen" size={12} /></StatusButton>
    <StatusGap $width={5} />
    <svg width="10" height="16" viewBox="0 0 10 16" aria-hidden="true">
      <path d="M8 6H10V8H8ZM5 9H7V11H5ZM8 9H10V11H8ZM2 12H4V14H2ZM5 12H7V14H5ZM8 12H10V14H8Z" fill="#ddd" />
    </svg>
  </StatusBar>
);

const App = () => (
  <Page>
    <GlobalStyle />
    <Behind>
      <svg width="90" height="8" viewBox="0 0 90 8" aria-hidden="true">
        <path d="M1 3H12V8H1Z" fill="#e2673c" />
        <path d="M24 3H33V8H24ZM44 4H50V8H44Z" fill="#4058a0" />
        <path d="M55 5H88" stroke="#9aa4cc" />
      </svg>
    </Behind>
    <Window>
      <TopBar />
      <StandardBar />
      <PropertiesBar />
      <Workspace>
        <ToolColumn tools={drawTools} />
        <DrawingArea />
        <ToolColumn tools={modifyTools} />
      </Workspace>
      <CommandLine />
      <Status />
    </Window>
  </Page>
);

export default App;
